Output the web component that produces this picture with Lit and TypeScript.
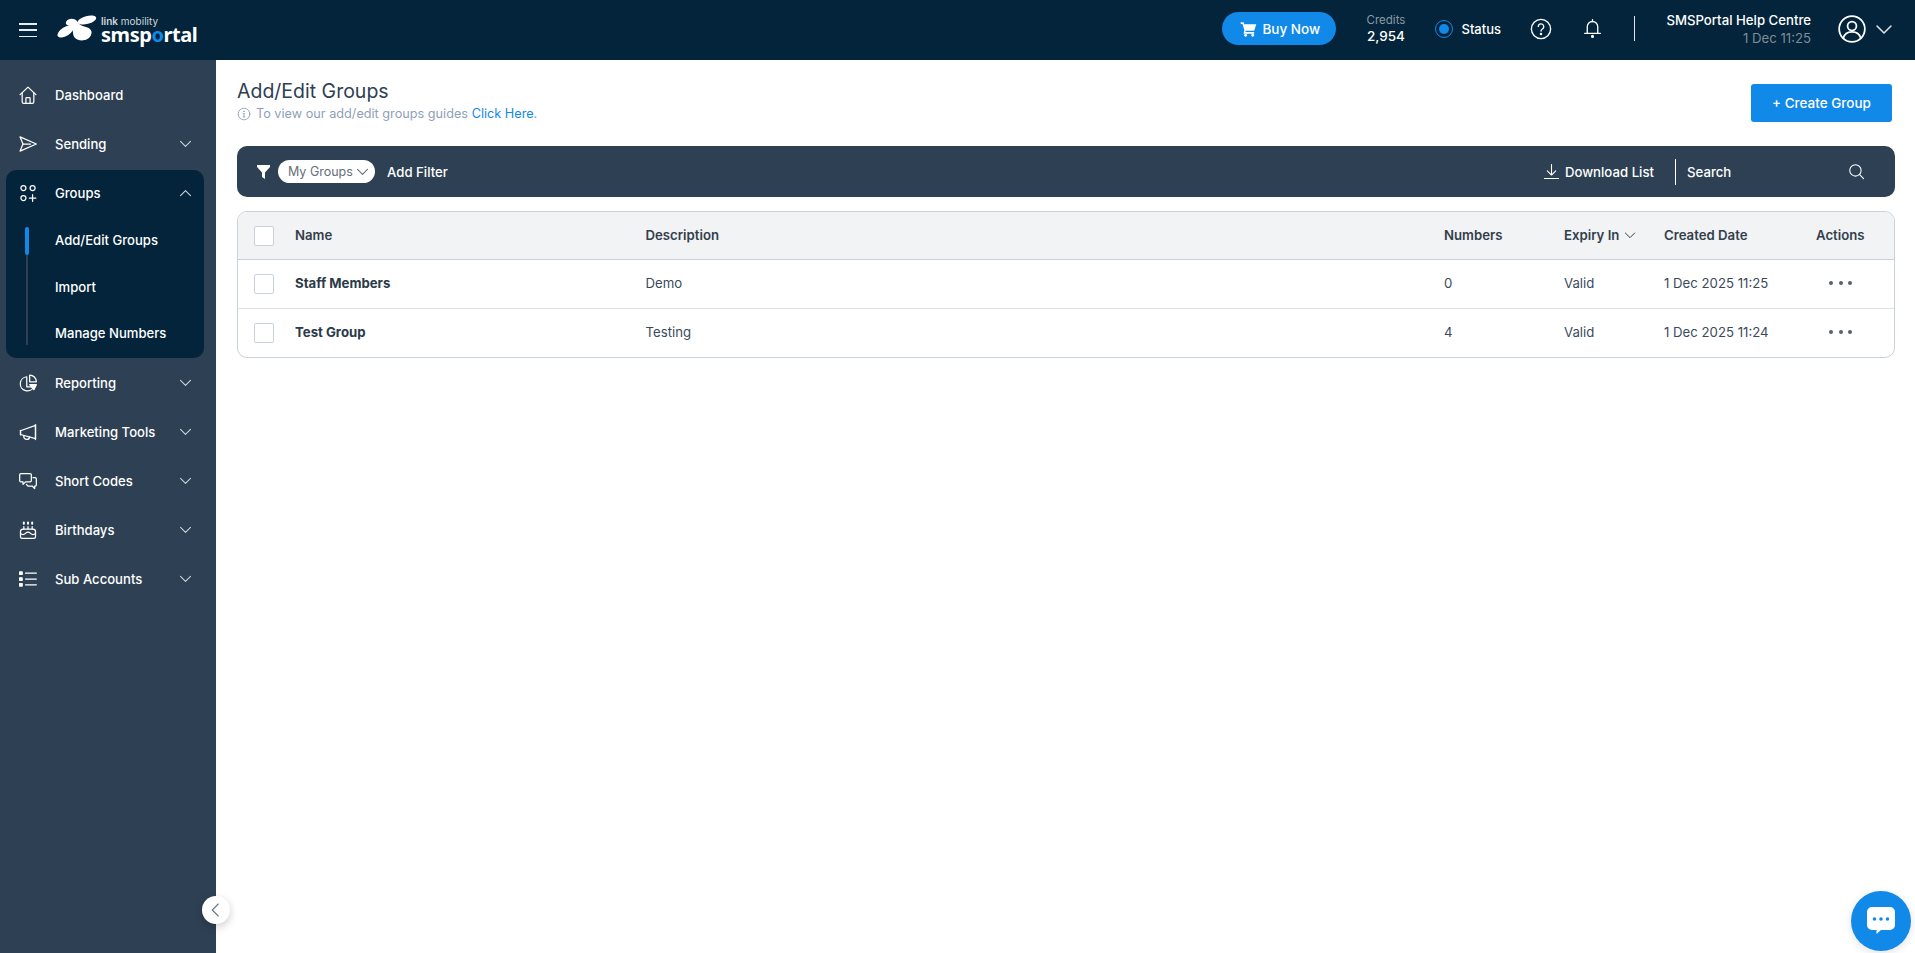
import { LitElement, html, css, svg } from 'lit';
import { customElement } from 'lit/decorators.js';

const ico = (body: unknown, size = 20, sw = 1.5) => html`<svg width=${size} height=${size} viewBox="0 0 24 24" fill="none" stroke="currentColor" stroke-width=${sw} stroke-linecap="round" stroke-linejoin="round">${body}</svg>`;

const chevDown = (size = 17) => ico(svg`<path d="M5 9l7 7 7-7"/>`, size);
const chevUp = (size = 17) => ico(svg`<path d="M5 15l7-7 7 7"/>`, size);

const icons = {
  home: svg`<path d="M2.500 11.500 12 2.500l9.500 9"/><path d="M5 9.500V20a2 2 0 0 0 2 2h10a2 2 0 0 0 2-2V9.500"/><path d="M9.500 22v-6a1 1 0 0 1 1-1h3a1 1 0 0 1 1 1v6"/>`,
  send: svg`<path d="M2.500 3.500 22 12 2.500 20.500 6 12z"/><path d="M6 12h9"/>`,
  groups: svg`<circle cx="6.500" cy="6" r="3"/><circle cx="17.500" cy="6" r="3"/><circle cx="6.500" cy="18" r="3"/><path d="M17.500 14v8M13.500 18h8"/>`,
  pie: svg`<path d="M10.500 4.500a8.500 8.500 0 1 0 8.500 12H10.500z"/><path d="M14 2.500a8 8 0 0 1 8 8h-8z"/><path d="M14 14h8l-3 6z" fill="currentColor"/>`,
  mega: svg`<path d="M3 10.500 21 4v16L3 15z"/><path d="M21 3v18"/><path d="M7 16.500a3.500 3.500 0 0 0 7 1.500"/><path d="M3 10v5.500"/>`,
  chat: svg`<path d="M3.500 3h11a1.500 1.500 0 0 1 1.500 1.500v7a1.500 1.500 0 0 1-1.500 1.500H9l-3 3v-3H3.500A1.500 1.500 0 0 1 2 11.500v-7A1.500 1.500 0 0 1 3.500 3z"/><path d="M18 8h2.500A1.500 1.500 0 0 1 22 9.500v7a1.500 1.500 0 0 1-1.500 1.500H20v3l-3-3h-5l-2-2"/>`,
  cake: svg`<path d="M3 14a3 3 0 0 1 3-3h12a3 3 0 0 1 3 3v6a2 2 0 0 1-2 2H5a2 2 0 0 1-2-2z"/><path d="M3 16c2 2 4 2 6 0s4-2 6 0 4 2 6 0"/><path d="M7 8v3M12 8v3M17 8v3"/><path d="M7 3v1.500M12 3v1.500M17 3v1.500" stroke-width="2.400"/>`,
  list: svg`<path d="M9 5h13M9 12h13M9 19h13"/><rect x="2" y="3.500" width="3" height="3" fill="currentColor"/><rect x="2" y="10.500" width="3" height="3" fill="currentColor"/><rect x="2" y="17.500" width="3" height="3" fill="currentColor"/>`,
};

const navBefore = [
  { label: 'Dashboard', icon: icons.home, arrow: false },
  { label: 'Sending', icon: icons.send, arrow: true },
];
const navAfter = [
  { label: 'Reporting', icon: icons.pie },
  { label: 'Marketing Tools', icon: icons.mega },
  { label: 'Short Codes', icon: icons.chat },
  { label: 'Birthdays', icon: icons.cake },
  { label: 'Sub Accounts', icon: icons.list },
];
const rows = [
  { name: 'Staff Members', desc: 'Demo', numbers: '0', expiry: 'Valid', created: '1 Dec 2025 11:25' },
  { name: 'Test Group', desc: 'Testing', numbers: '4', expiry: 'Valid', created: '1 Dec 2025 11:24' },
];

@customElement('app-root')
export class AppRoot extends LitElement {
  static styles = css`
    :host {
      display: block;
      height: 100vh;
      overflow: hidden;
      font-family: Inter, 'Noto Sans', sans-serif;
      font-size: 13.2px;
      color: #3a4a5c;
    }
    .top {
      height: 60px;
      background: #03243a;
      display: flex;
      align-items: center;
      color: #fff;
    }
    .burger {
      margin-left: 19px;
      width: 18px;
      height: 14px;
      display: flex;
      flex-direction: column;
      justify-content: space-between;
    }
    .burger i {
      display: block;
      height: 1.5px;
      background: #e8edf1;
    }
    .logo {
      margin-left: 20px;
      display: flex;
      align-items: center;
      gap: 3px;
      width: 140px;
    }
    .logo svg {
      flex: none;
      margin-top: -2px;
    }
    .logo-text {
      display: flex;
      flex-direction: column;
      white-space: nowrap;
    }
    .logo-small {
      font-size: 10px;
      line-height: 10px;
      color: #cfd8df;
    }
    .logo-small b {
      font-weight: 600;
    }
    .logo-big {
      font-family: 'Noto Sans', sans-serif;
      font-size: 20px;
      line-height: 18px;
      font-weight: 700;
      letter-spacing: -0.45px;
    }
    .logo-big span {
      color: #1089e8;
    }
    .top-right {
      margin-left: auto;
      margin-bottom: 3px;
      display: flex;
      align-items: center;
    }
    .buy {
      width: 114px;
      height: 33px;
      box-sizing: border-box;
      padding-left: 18px;
      border-radius: 17px;
      background: #1089e8;
      display: flex;
      align-items: center;
      gap: 5px;
      font-size: 13.5px;
      font-weight: 500;
    }
    .credits {
      margin-left: 30px;
      width: 39px;
      text-align: center;
    }
    .credits small {
      display: block;
      font-size: 11.5px;
      color: #8b9aa6;
      margin-bottom: 1px;
    }
    .credits b {
      font-weight: 500;
      font-size: 13.5px;
    }
    .status {
      margin-left: 30px;
      display: flex;
      align-items: center;
      gap: 8px;
      font-weight: 500;
      font-size: 13px;
      margin-top: 1px;
    }
    .radio {
      width: 18px;
      height: 18px;
      box-sizing: border-box;
      border: 1px solid #1089e8;
      border-radius: 50%;
      display: flex;
      align-items: center;
      justify-content: center;
    }
    .radio i {
      width: 10px;
      height: 10px;
      border-radius: 50%;
      background: #1089e8;
    }
    .help {
      margin-left: 29px;
      display: flex;
    }
    .bell {
      margin-left: 30px;
      display: flex;
    }
    .vr {
      margin-left: 31px;
      width: 1px;
      height: 25px;
      background: #dfe5ea;
    }
    .who {
      margin-left: 30px;
      text-align: right;
      width: 146px;
      font-weight: 500;
      font-size: 13.2px;
      white-space: nowrap;
    }
    .who small {
      display: block;
      font-size: 13.2px;
      font-weight: 400;
      color: #7d8c98;
      margin-top: 2px;
    }
    .avatar {
      margin-left: 27px;
      display: flex;
    }
    .user-chev {
      margin-left: 6px;
      margin-right: 19px;
      display: flex;
      color: #dfe5ea;
    }
    .body {
      height: calc(100vh - 60px);
      display: flex;
      position: relative;
    }
    .side {
      width: 216px;
      flex: none;
      box-sizing: border-box;
      background: #2e4053;
      padding: 10px 12px 0 6px;
      color: #fff;
      font-weight: 500;
      font-size: 13.1px;
    }
    .item {
      height: 49px;
      display: flex;
      align-items: center;
      padding-left: 12px;
      padding-right: 10px;
    }
    .item .lbl {
      margin-left: 17px;
      flex: 1;
    }
    .item svg:first-child {
      flex: none;
    }
    .chev {
      display: flex;
      color: #cdd5dc;
    }
    .panel {
      background: #03243a;
      border-radius: 10px;
      height: 188px;
      margin-top: 2px;
    }
    .panel .item {
      height: 46px;
    }
    .subs {
      margin-left: 14px;
      position: relative;
      height: 128px;
      margin-top: 1px;
      display: grid;
      grid-template-rows: 46px 47px 45px;
    }
    .track {
      position: absolute;
      left: 6px;
      top: 10px;
      bottom: 0;
      width: 2px;
      background: #2e4053;
    }
    .mark {
      position: absolute;
      left: 5px;
      top: 10px;
      width: 4px;
      height: 28px;
      border-radius: 2px;
      background: #1089e8;
    }
    .sub {
      padding-left: 35px;
      display: flex;
      align-items: center;
    }
    .collapse {
      position: absolute;
      left: 202px;
      top: 836px;
      width: 28px;
      height: 28px;
      border-radius: 50%;
      background: #fff;
      box-shadow: 0 3px 8px rgba(0, 0, 0, 0.2);
      display: flex;
      align-items: center;
      justify-content: center;
      color: #6b7784;
    }
    .main {
      flex: 1;
      min-width: 0;
      padding: 0 20px 0 21px;
    }
    .head {
      height: 86px;
      display: flex;
      justify-content: space-between;
    }
    h1 {
      margin: 19px 0 0;
      font-size: 19.5px;
      line-height: 24px;
      font-weight: 400;
      color: #2e4053;
    }
    .hint {
      display: flex;
      align-items: center;
      gap: 5px;
      margin-top: 3px;
      font-size: 12.7px;
      color: #8f9fb8;
    }
    .hint a {
      color: #1089e8;
    }
    .create {
      margin: 24px 3px 0 0;
      width: 141px;
      height: 38px;
      border-radius: 3px;
      background: #1089e8;
      color: #fff;
      font-size: 13.5px;
      font-weight: 500;
      display: flex;
      align-items: center;
      justify-content: center;
    }
    .filter {
      height: 51px;
      border-radius: 10px;
      background: #2e4053;
      color: #fff;
      display: flex;
      align-items: center;
      padding: 0 30px 0 20px;
      font-weight: 500;
    }
    .filter > svg {
      flex: none;
    }
    .chip {
      margin-left: 8px;
      width: 97px;
      height: 23px;
      box-sizing: border-box;
      padding-left: 10px;
      border-radius: 12px;
      background: #fff;
      color: #666f7a;
      display: flex;
      align-items: center;
      gap: 1px;
      font-size: 12.5px;
      font-weight: 400;
    }
    .add {
      margin-left: 12px;
    }
    .dl {
      margin-left: auto;
      display: flex;
      align-items: center;
      gap: 5px;
    }
    .sep {
      margin-left: 21px;
      width: 1px;
      height: 26px;
      background: #fff;
    }
    .search {
      margin-left: 11px;
      width: 130px;
      margin-right: 31px;
    }
    .table {
      margin-top: 14px;
      border: 1px solid #c9d1d9;
      border-radius: 10px;
      overflow: hidden;
    }
    .row {
      display: grid;
      grid-template-columns: 41px 350.5px 798.5px 120px 100px 152px 1fr;
      align-items: center;
      height: 48px;
      padding-left: 16px;
      border-top: 1px solid #dde2ea;
    }
    .row span:not(.box) {
      margin-top: -2px;
    }
    .row.hd {
      height: 47px;
      border-top: 0;
      border-bottom: 1px solid #c9d1d9;
      background: #f1f3f5;
      color: #333f4b;
      font-weight: 600;
    }
    .row.hd span:not(.box) {
      margin-top: -1px;
    }
    .row.hd + .row {
      border-top: 0;
    }
    .box {
      width: 20px;
      height: 20px;
      box-sizing: border-box;
      border: 1px solid #c9d1dc;
      border-radius: 2px;
      background: #fff;
    }
    .name {
      font-weight: 700;
      color: #2b3a49;
    }
    .sort {
      display: flex;
      align-items: center;
      gap: 3px;
    }
    .row .dots {
      display: flex;
      gap: 5.5px;
      margin-left: 13px;
      margin-top: 0;
    }
    .dots i {
      width: 4px;
      height: 4px;
      border-radius: 50%;
      background: #56626e;
    }
    .chat {
      position: fixed;
      left: 1851px;
      top: 891px;
      width: 60px;
      height: 60px;
      border-radius: 50%;
      background: #1089e8;
      box-shadow: 0 2px 8px rgba(0, 0, 0, 0.12);
      display: flex;
      align-items: center;
      justify-content: center;
    }
  `;

  render() {
    return html`
      <div class="top">
        <div class="burger"><i></i><i></i><i></i></div>
        <div class="logo">
          <svg width="41" height="28" viewBox="0 0 41 28" fill="#fff">
            <ellipse cx="8.500" cy="16.500" rx="9" ry="4.500" transform="rotate(-32 8.500 16.500)"/>
            <ellipse cx="30" cy="5" rx="9.500" ry="4" transform="rotate(-15 30 5)"/>
            <path d="M9 7C11 3 17 3 20 6C22 9 24 11 29 12C33 13 36 16 34 20C32 26 22 27 18 23C15 20 17 15 14 12C11 10 8 10 9 7z"/>
          </svg>
          <div class="logo-text">
            <span class="logo-small"><b>link</b> mobility</span>
            <span class="logo-big">smsp<span>o</span>rtal</span>
          </div>
        </div>
        <div class="top-right">
          <div class="buy">
            <svg width="17" height="17" viewBox="0 0 24 24" fill="#fff"><path d="M1 3h4l1 3h17l-3 9H8l-.5 2H20v2.500H5l1.200-5L3.500 5.500H1z"/><circle cx="8" cy="21.500" r="2"/><circle cx="18" cy="21.500" r="2"/></svg>
            Buy Now
          </div>
          <div class="credits"><small>Credits</small><b>2,954</b></div>
          <div class="status"><span class="radio"><i></i></span>Status</div>
          <span class="help">${ico(svg`<circle cx="12" cy="12" r="10.500"/><path d="M9 9.300a3 3 0 1 1 4.500 2.700c-1 .6-1.500 1.200-1.500 2.300"/><circle cx="12" cy="17.500" r=".6" fill="currentColor"/>`, 22)}</span>
          <span class="bell">${ico(svg`<path d="M6 17V10a6 6 0 0 1 12 0v7"/><path d="M3 17.500h18"/><path d="M12 2v2"/><circle cx="12" cy="21" r="1" fill="currentColor"/>`, 21)}</span>
          <span class="vr"></span>
          <div class="who">SMSPortal Help Centre<small>1 Dec 11:25</small></div>
          <span class="avatar">${ico(svg`<circle cx="12" cy="12" r="11"/><circle cx="12" cy="9.500" r="3.800"/><path d="M4.500 20c1-4 4-5.500 7.500-5.500s6.500 1.500 7.500 5.500"/>`, 28)}</span>
          <span class="user-chev">${chevDown(24)}</span>
        </div>
      </div>
      <div class="body">
        <nav class="side">
          ${navBefore.map((n) => html`
            <div class="item">${ico(n.icon)}<span class="lbl">${n.label}</span>
              ${n.arrow ? html`<span class="chev">${chevDown()}</span>` : ''}</div>`)}
          <div class="panel">
            <div class="item">${ico(icons.groups)}<span class="lbl">Groups</span><span class="chev">${chevUp()}</span></div>
            <div class="subs">
              <span class="track"></span><span class="mark"></span>
              <div class="sub">Add/Edit Groups</div>
              <div class="sub">Import</div>
              <div class="sub">Manage Numbers</div>
            </div>
          </div>
          ${navAfter.map((n) => html`
            <div class="item">${ico(n.icon)}<span class="lbl">${n.label}</span><span class="chev">${chevDown()}</span></div>`)}
        </nav>
        <span class="collapse">${ico(svg`<path d="M15 4l-8 8 8 8"/>`, 18)}</span>
        <main class="main">
          <div class="head">
            <div>
              <h1>Add/Edit Groups</h1>
              <div class="hint">
                ${ico(svg`<circle cx="12" cy="12" r="10"/><path d="M12 11v6M10.500 17h3M10.500 11H12"/><circle cx="12" cy="7.500" r=".5" fill="currentColor"/>`, 14)}
                <span>To view our add/edit groups guides <a>Click Here</a>.</span>
              </div>
            </div>
            <div class="create">+ Create Group</div>
          </div>
          <div class="filter">
            <svg width="13" height="14" viewBox="0 0 13 14" fill="#fff"><path d="M0 0h13v2L8 7.500V14L5 12V7.500L0 2z"/></svg>
            <div class="chip">My Groups ${chevDown()}</div>
            <span class="add">Add Filter</span>
            <div class="dl">${ico(svg`<path d="M12 2v15M6 11l6 6 6-6M2 22h20"/>`, 17)}Download List</div>
            <span class="sep"></span>
            <span class="search">Search</span>
            ${ico(svg`<circle cx="10.500" cy="10.500" r="8"/><path d="M16.500 16.500 22 22"/>`, 17)}
          </div>
          <div class="table">
            <div class="row hd">
              <span class="box"></span>
              <span>Name</span><span>Description</span><span>Numbers</span>
              <span class="sort">Expiry In ${chevDown(16)}</span>
              <span>Created Date</span><span>Actions</span>
            </div>
            ${rows.map((r) => html`
              <div class="row">
                <span class="box"></span>
                <span class="name">${r.name}</span><span>${r.desc}</span><span>${r.numbers}</span>
                <span>${r.expiry}</span><span>${r.created}</span>
                <span class="dots"><i></i><i></i><i></i></span>
              </div>`)}
          </div>
        </main>
      </div>
      <div class="chat">
        <svg width="30" height="30" viewBox="0 0 30 30"><path d="M6 1h18a5 5 0 0 1 5 5v13a5 5 0 0 1-5 5H15l-4.500 4v-4H6a5 5 0 0 1-5-5V6a5 5 0 0 1 5-5z" fill="#fff"/><circle cx="8.500" cy="13" r="1.800" fill="#1089e8"/><circle cx="15" cy="13" r="1.800" fill="#1089e8"/><circle cx="21.500" cy="13" r="1.800" fill="#1089e8"/></svg>
      </div>
    `;
  }
}
